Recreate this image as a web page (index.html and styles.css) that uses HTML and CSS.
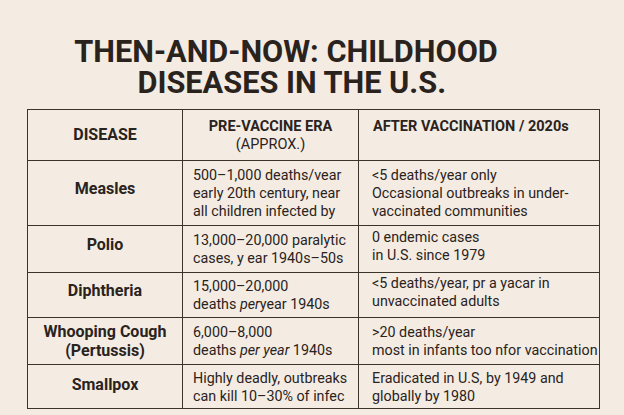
FILE: index.html
```html
<!DOCTYPE html>
<html>
<head>
<meta charset="utf-8">
<link rel="stylesheet" href="styles.css">
</head>
<body>
<div class="page">
  <h1 class="title"><span class="t1">THEN-AND-NOW: CHILDHOOD</span><span class="t2">DISEASES IN THE U.S.</span></h1>
  <table class="grid">
    <colgroup><col class="c1"><col class="c2"><col class="c3"></colgroup>
    <tr class="head">
      <th class="name">DISEASE</th>
      <th class="pre"><b>PRE-VACCINE ERA</b><br><span class="approx">(APPROX.)</span></th>
      <th class="after">AFTER VACCINATION / 2020s</th>
    </tr>
    <tr class="r-measles">
      <td class="name raised">Measles</td>
      <td class="txt">500–1,000 deaths/vear<br>early 20th century, near<br>all children infected by</td>
      <td class="txt">&lt;5 deaths/year only<br>Occasional outbreaks in under-<br>vaccinated communities</td>
    </tr>
    <tr class="r-polio">
      <td class="name raised">Polio</td>
      <td class="txt">13,000–20,000 paralytic<br>cases, y ear 1940s–50s</td>
      <td class="txt up">0 endemic cases<br>in U.S. since 1979</td>
    </tr>
    <tr class="r-diph">
      <td class="name raised">Diphtheria</td>
      <td class="txt">15,000–20,000<br>deaths <i>per</i>year 1940s</td>
      <td class="txt up">&lt;5 deaths/year, pr a yacar in<br>unvaccinated adults</td>
    </tr>
    <tr class="r-whoop">
      <td class="name">Whooping Cough<br>(Pertussis)</td>
      <td class="txt">6,000–8,000<br>deaths <i>per year</i> 1940s</td>
      <td class="txt">&gt;20 deaths/year<br>most in infants too nfor vaccination</td>
    </tr>
    <tr class="r-small">
      <td class="name raised-s">Smallpox</td>
      <td class="txt">Highly deadly, outbreaks<br>can kill 10–30% of infec</td>
      <td class="txt">Eradicated in U.S, by 1949 and<br>globally by 1980</td>
    </tr>
  </table>
</div>
</body>
</html>
```
FILE: styles.css
```css
html, body {
  margin: 0;
  padding: 0;
  background: #f4ece2;
}
.page {
  width: 624px;
  height: 415px;
  overflow: hidden;
  padding-top: 36px;
  box-sizing: border-box;
  color: #2a231d;
}
.title {
  margin: 0 0 11px 0;
  font-family: "Roboto", sans-serif;
  font-weight: 700;
  font-size: 32px;
  line-height: 31px;
  color: #2a231d;
}
.title span {
  display: block;
  width: 624px;
  text-align: center;
  transform: scaleX(0.96);
  transform-origin: 286px 0;
  box-sizing: border-box;
}
.t1 { padding-right: 52px; }
.t2 { padding-right: 40px; }
.grid {
  margin-left: 27px;
  width: 572px;
  border-collapse: collapse;
  table-layout: fixed;
  font-family: "Roboto", "Noto Sans", sans-serif;
  font-size: 14.3px;
  color: #2a231d;
}
.c1 { width: 155px; }
.c2 { width: 176px; }
.c3 { width: 241px; }
.grid th, .grid td {
  border: 1.5px solid #3b332c;
  padding: 0;
}
.head { height: 51px; }
.head th {
  vertical-align: top;
  padding-top: 8px;
  font-size: 14.5px;
  line-height: 18px;
}
.head th.name { vertical-align: middle; padding-top: 0; text-align: center; font-size: 16px; }
.head th.pre { text-align: center; }
.head th.pre b { font-weight: 700; }
.approx { font-weight: 400; }
.head th.after { text-align: left; padding-left: 14px; }
td.name {
  text-align: center;
  font-weight: 700;
  font-size: 16px;
  line-height: 19px;
  vertical-align: middle;
}
td.raised { padding-bottom: 9px; }
td.raised-s { padding-bottom: 4px; }
td.txt {
  vertical-align: middle;
  white-space: nowrap;
  overflow: hidden;
  line-height: 18px;
  padding-left: 10px;
}
td.txt.up { padding-bottom: 7px; }
td.txt + td.txt { padding-left: 13px; }
.r-measles { height: 65px; }
.r-polio { height: 47px; }
.r-diph { height: 45px; }
.r-whoop { height: 47px; }
.r-small { height: 44px; }
```
